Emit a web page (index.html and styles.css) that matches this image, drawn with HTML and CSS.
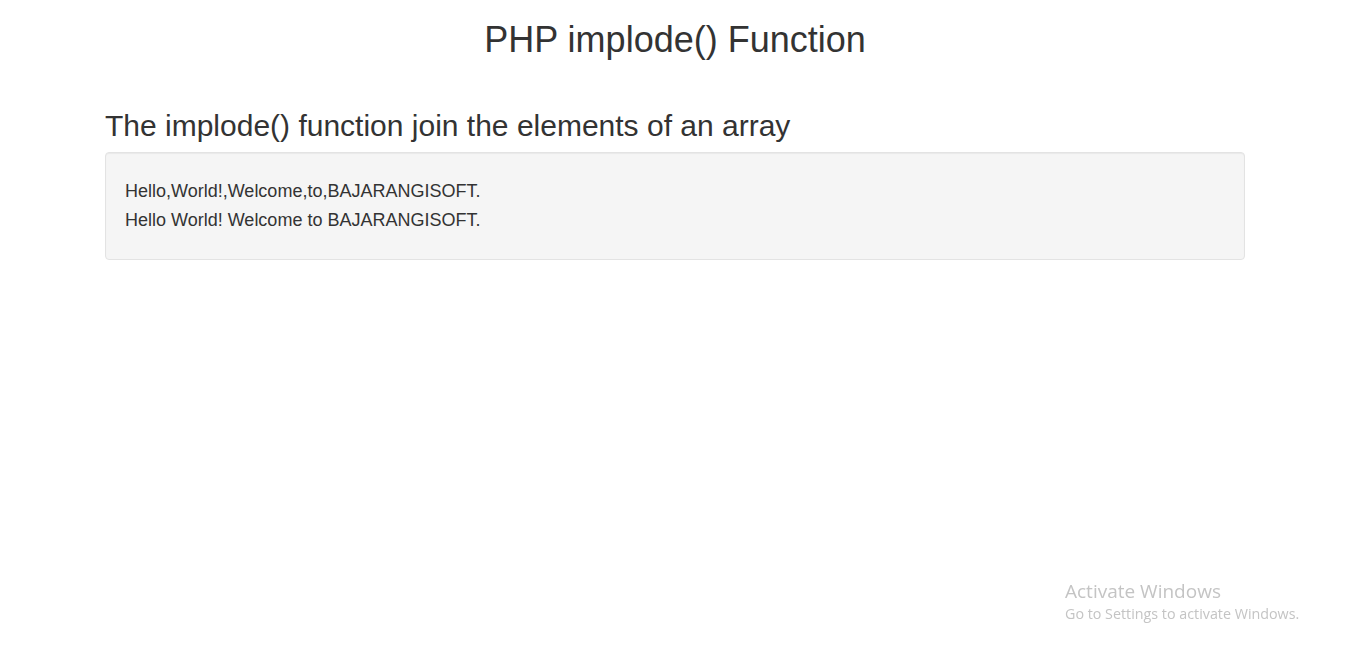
FILE: index.html
```html
<!DOCTYPE html>
<html lang="en">
<head>
<meta charset="utf-8">
<title>PHP implode() Function</title>
<link rel="stylesheet" href="styles.css">
</head>
<body>
<div class="page">
  <h1 class="title">PHP implode() Function</h1>
  <div class="container">
    <h2 class="subtitle">The implode() function join the elements of an array</h2>
    <div class="well">
      <div class="line">Hello,World!,Welcome,to,BAJARANGISOFT.</div>
      <div class="line">Hello World! Welcome to BAJARANGISOFT.</div>
    </div>
  </div>
</div>
<div class="watermark">
  <div class="wm-title">Activate Windows</div>
  <div class="wm-sub">Go to Settings to activate Windows.</div>
</div>
</body>
</html>
```

FILE: styles.css
```css
html, body {
  margin: 0;
  padding: 0;
  background: #fff;
}
body {
  font-family: "Liberation Sans", Arial, Helvetica, sans-serif;
  color: #333;
}
.page {
  width: 1350px;
}
.title {
  margin: 20px 0 0;
  font-size: 36px;
  line-height: 1.1;
  font-weight: 400;
  text-align: center;
}
.container {
  width: 1140px;
  margin: 0 auto;
}
.subtitle {
  margin: 49px 0 10px;
  font-size: 30px;
  line-height: 1.1;
  font-weight: 400;
}
.well {
  background: #f5f5f5;
  border: 1px solid #e3e3e3;
  border-radius: 4px;
  box-shadow: inset 0 1px 1px rgba(0,0,0,.05);
  padding: 24px 19px 24px;
}
.line {
  font-size: 18px;
  line-height: 29px;
}
.watermark {
  position: fixed;
  left: 1065px;
  top: 578px;
  font-family: "Open Sans", "Noto Sans", sans-serif;
  color: #c4c4c4;
}
.wm-title {
  font-size: 19px;
  line-height: 26px;
}
.wm-sub {
  font-size: 14.3px;
  line-height: 20px;
}
```
